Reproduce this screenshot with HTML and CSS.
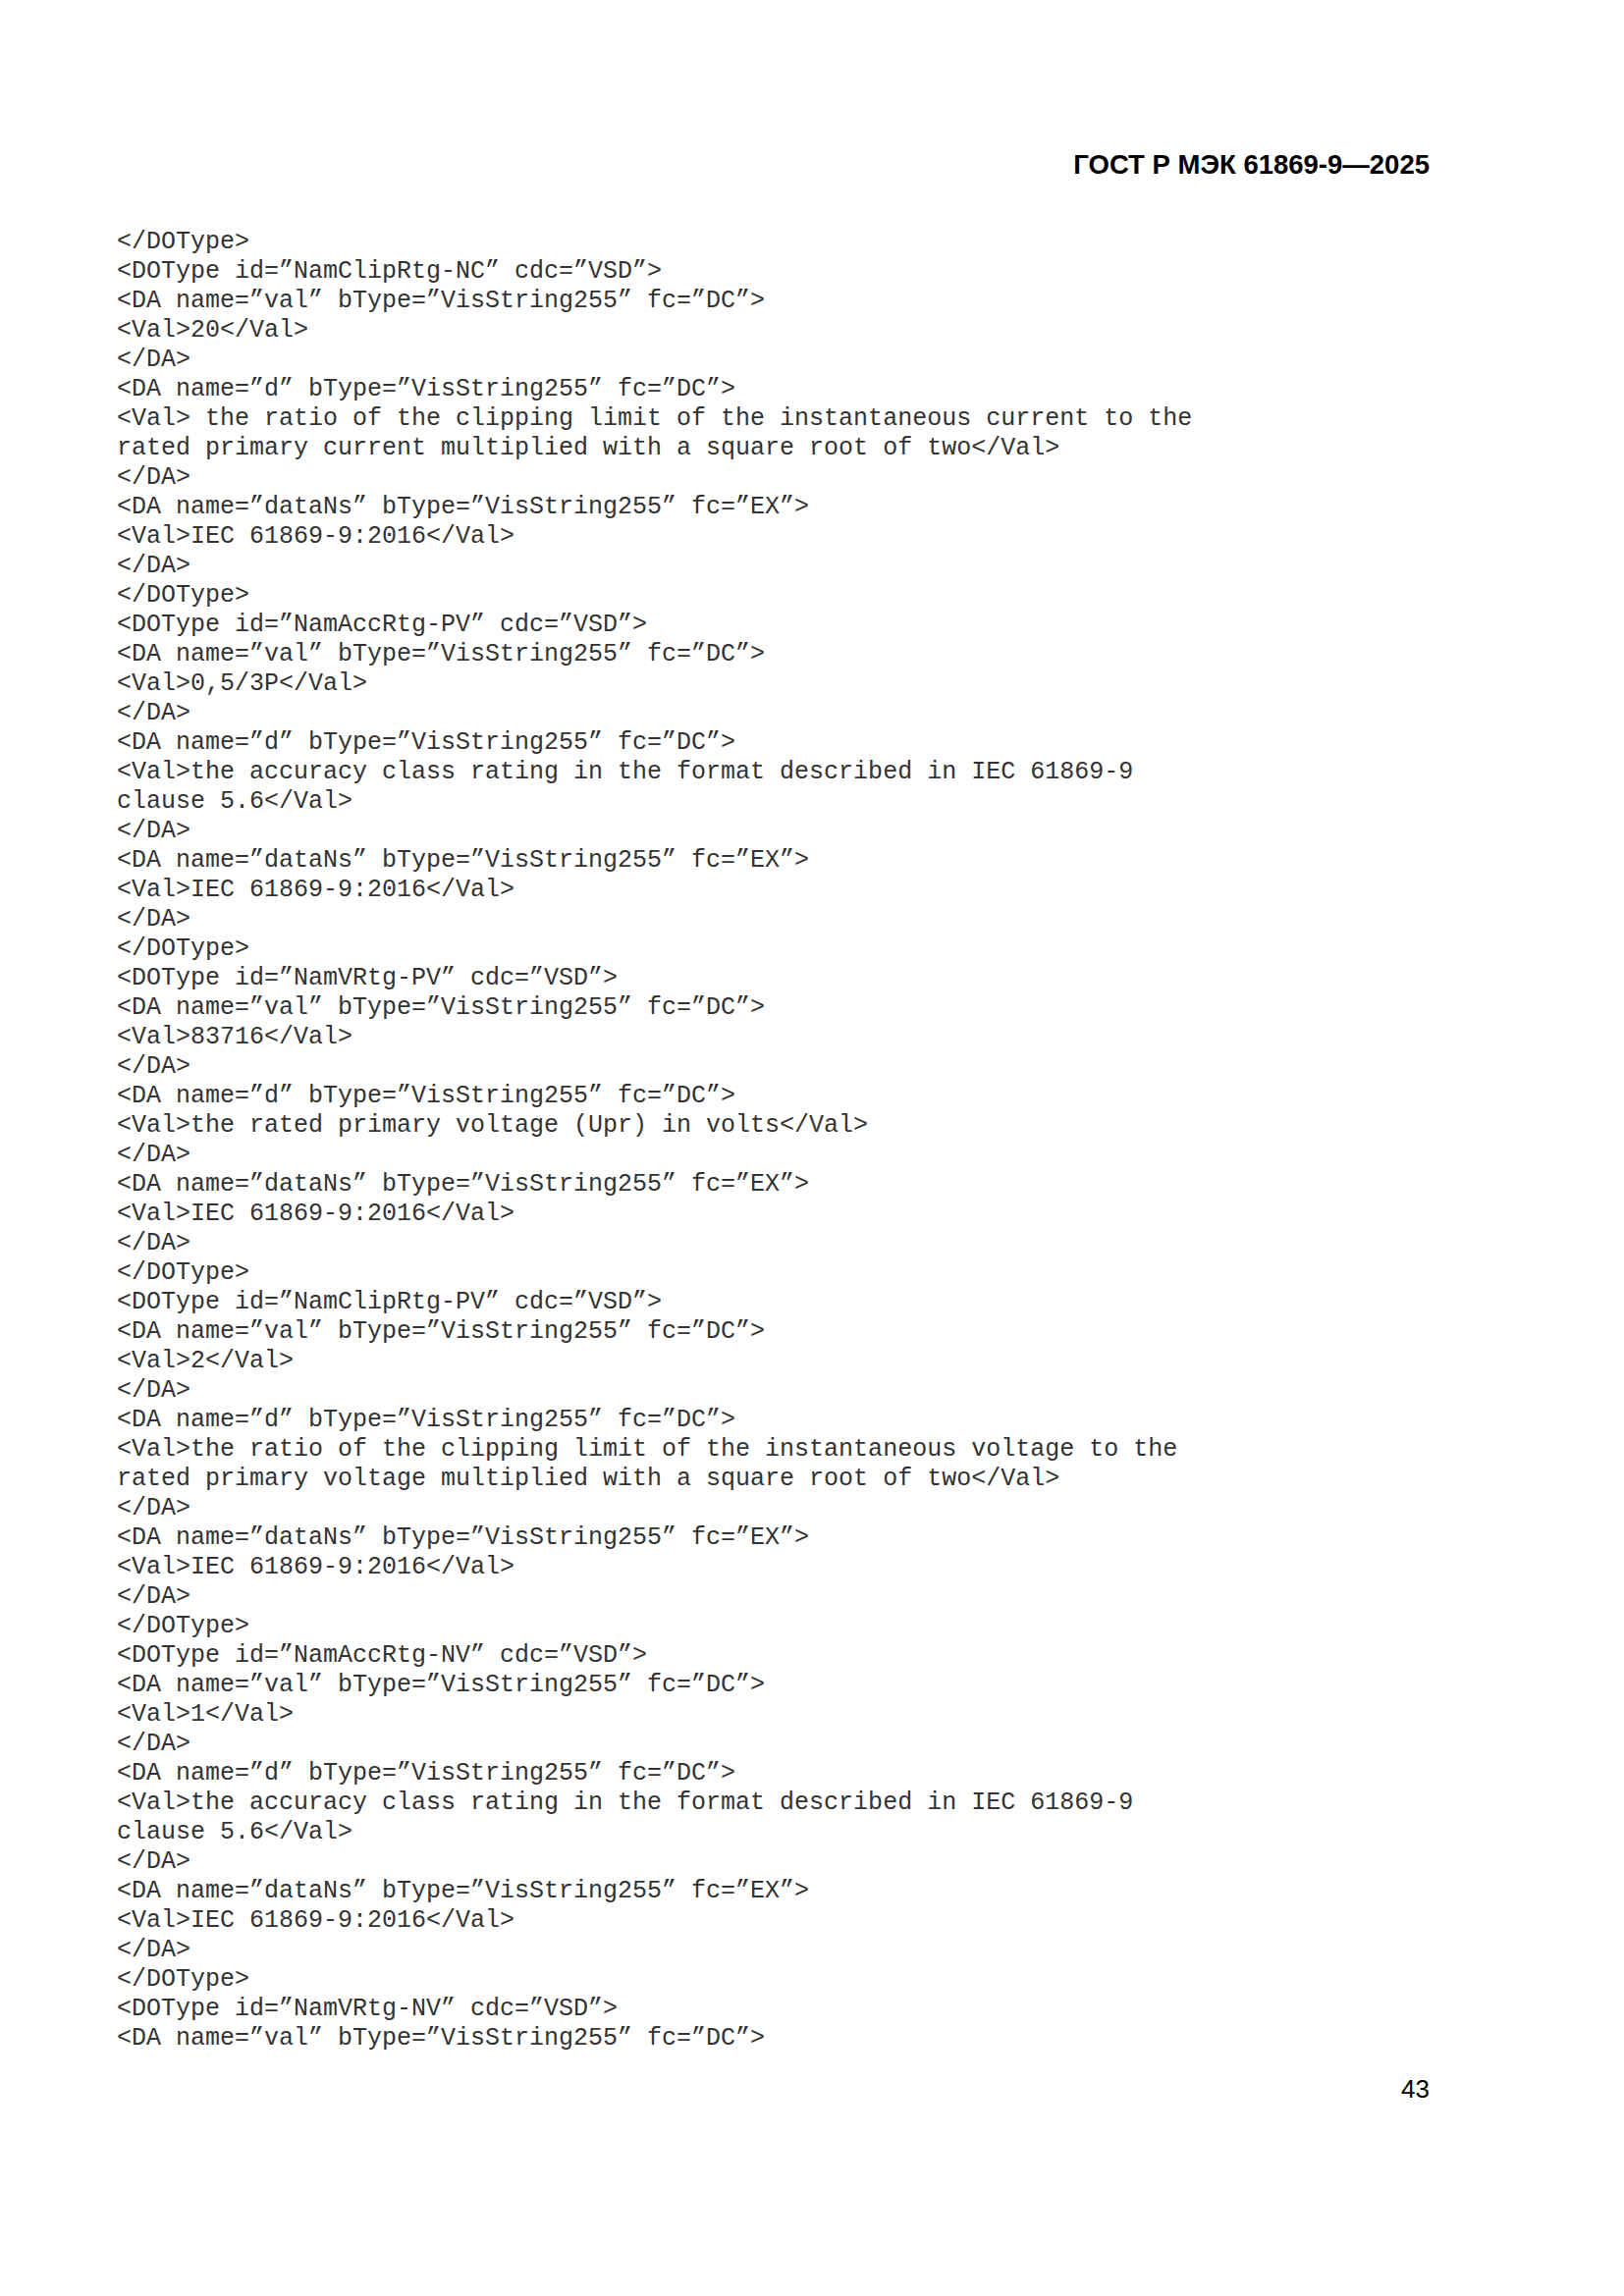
FILE: index.html
```html
<!DOCTYPE html>
<html lang="ru">
<head>
<meta charset="utf-8">
<title>ГОСТ Р МЭК 61869-9—2025</title>
<link rel="stylesheet" href="styles.css">
</head>
<body>
<div class="page">
<header class="doc-header">ГОСТ Р МЭК 61869-9—2025</header>
<pre class="code">&lt;/DOType&gt;
&lt;DOType id=”NamClipRtg-NC” cdc=”VSD”&gt;
&lt;DA name=”val” bType=”VisString255” fc=”DC”&gt;
&lt;Val&gt;20&lt;/Val&gt;
&lt;/DA&gt;
&lt;DA name=”d” bType=”VisString255” fc=”DC”&gt;
&lt;Val&gt; the ratio of the clipping limit of the instantaneous current to the
rated primary current multiplied with a square root of two&lt;/Val&gt;
&lt;/DA&gt;
&lt;DA name=”dataNs” bType=”VisString255” fc=”EX”&gt;
&lt;Val&gt;IEC 61869-9:2016&lt;/Val&gt;
&lt;/DA&gt;
&lt;/DOType&gt;
&lt;DOType id=”NamAccRtg-PV” cdc=”VSD”&gt;
&lt;DA name=”val” bType=”VisString255” fc=”DC”&gt;
&lt;Val&gt;0,5/3P&lt;/Val&gt;
&lt;/DA&gt;
&lt;DA name=”d” bType=”VisString255” fc=”DC”&gt;
&lt;Val&gt;the accuracy class rating in the format described in IEC 61869-9
clause 5.6&lt;/Val&gt;
&lt;/DA&gt;
&lt;DA name=”dataNs” bType=”VisString255” fc=”EX”&gt;
&lt;Val&gt;IEC 61869-9:2016&lt;/Val&gt;
&lt;/DA&gt;
&lt;/DOType&gt;
&lt;DOType id=”NamVRtg-PV” cdc=”VSD”&gt;
&lt;DA name=”val” bType=”VisString255” fc=”DC”&gt;
&lt;Val&gt;83716&lt;/Val&gt;
&lt;/DA&gt;
&lt;DA name=”d” bType=”VisString255” fc=”DC”&gt;
&lt;Val&gt;the rated primary voltage (Upr) in volts&lt;/Val&gt;
&lt;/DA&gt;
&lt;DA name=”dataNs” bType=”VisString255” fc=”EX”&gt;
&lt;Val&gt;IEC 61869-9:2016&lt;/Val&gt;
&lt;/DA&gt;
&lt;/DOType&gt;
&lt;DOType id=”NamClipRtg-PV” cdc=”VSD”&gt;
&lt;DA name=”val” bType=”VisString255” fc=”DC”&gt;
&lt;Val&gt;2&lt;/Val&gt;
&lt;/DA&gt;
&lt;DA name=”d” bType=”VisString255” fc=”DC”&gt;
&lt;Val&gt;the ratio of the clipping limit of the instantaneous voltage to the
rated primary voltage multiplied with a square root of two&lt;/Val&gt;
&lt;/DA&gt;
&lt;DA name=”dataNs” bType=”VisString255” fc=”EX”&gt;
&lt;Val&gt;IEC 61869-9:2016&lt;/Val&gt;
&lt;/DA&gt;
&lt;/DOType&gt;
&lt;DOType id=”NamAccRtg-NV” cdc=”VSD”&gt;
&lt;DA name=”val” bType=”VisString255” fc=”DC”&gt;
&lt;Val&gt;1&lt;/Val&gt;
&lt;/DA&gt;
&lt;DA name=”d” bType=”VisString255” fc=”DC”&gt;
&lt;Val&gt;the accuracy class rating in the format described in IEC 61869-9
clause 5.6&lt;/Val&gt;
&lt;/DA&gt;
&lt;DA name=”dataNs” bType=”VisString255” fc=”EX”&gt;
&lt;Val&gt;IEC 61869-9:2016&lt;/Val&gt;
&lt;/DA&gt;
&lt;/DOType&gt;
&lt;DOType id=”NamVRtg-NV” cdc=”VSD”&gt;
&lt;DA name=”val” bType=”VisString255” fc=”DC”&gt;</pre>
<footer class="page-number">43</footer>
</div>
</body>
</html>
```

FILE: styles.css
```css
html, body {
  margin: 0;
  padding: 0;
  background: #ffffff;
}

.page {
  width: 1654px;
  height: 2339px;
  box-sizing: border-box;
  padding: 153px 198px 0 119px;
  display: flex;
  flex-direction: column;
}

.doc-header {
  font-family: "Liberation Sans", Arial, sans-serif;
  font-weight: bold;
  font-size: 27.5px;
  line-height: 30px;
  color: #000;
  text-align: right;
}

.code {
  margin: 49px 0 0 0;
  font-family: "Liberation Mono", "Courier New", monospace;
  font-size: 25px;
  line-height: 30px;
  color: #333333;
  white-space: pre;
}

.page-number {
  margin-top: 21px;
  font-family: "Liberation Sans", Arial, sans-serif;
  font-size: 26px;
  line-height: 30px;
  color: #000;
  text-align: right;
}
```
